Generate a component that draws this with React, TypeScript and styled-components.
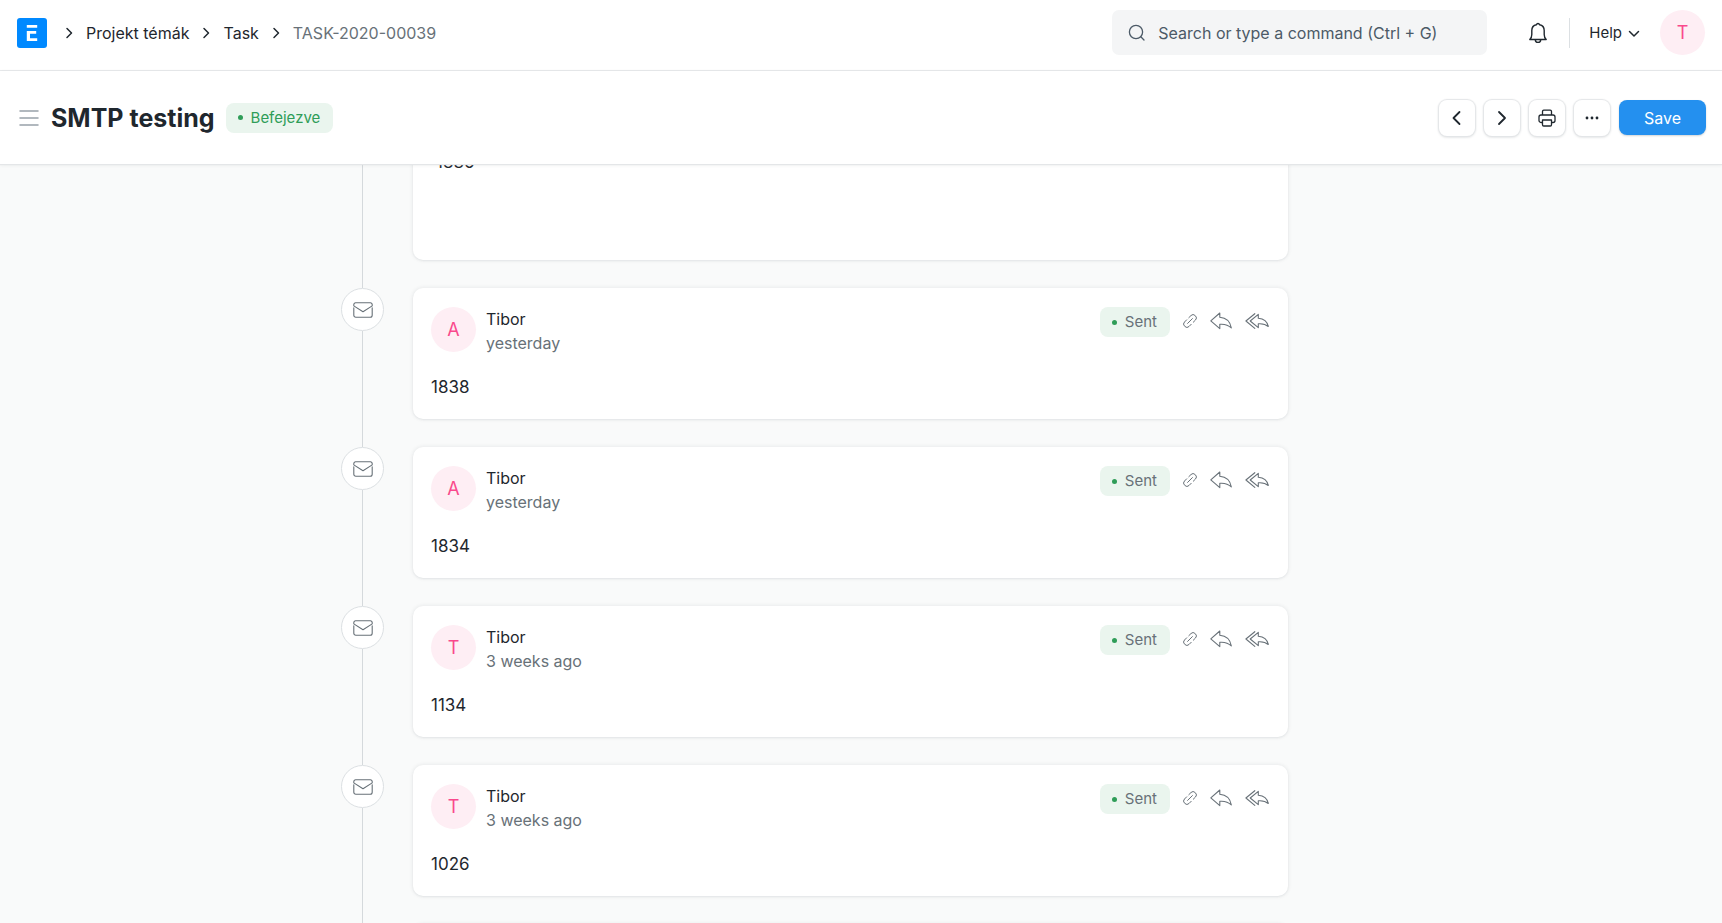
import React from "react";
import styled, { createGlobalStyle } from "styled-components";

const GlobalStyle = createGlobalStyle`
  *, *::before, *::after { box-sizing: border-box; }
  body {
    margin: 0;
    background: #f9fafa;
    color: #1f272e;
    font-family: Inter, "Noto Sans", sans-serif;
    font-size: 16px;
    line-height: 24px;
  }
  button, input { font: inherit; color: inherit; }
  a { color: inherit; text-decoration: none; }
  svg { display: block; flex: none; }
`;

const Page = styled.div`
  display: flex;
  flex-direction: column;
  height: 100vh;
  overflow: hidden;
`;

const Navbar = styled.header`
  display: flex;
  align-items: center;
  justify-content: space-between;
  flex: none;
  padding: 10px 17px 15px;
  background: #fff;
  border-bottom: 1px solid #e8eaec;
`;

const Breadcrumbs = styled.nav`
  display: flex;
  align-items: center;
  gap: 10px;
`;

const Logo = styled.a`
  display: block;
  margin-right: 5px;
`;

const Crumb = styled.a<{ $muted?: boolean }>`
  color: ${(p) => (p.$muted ? "#687178" : "#1f272e")};
`;

const NavTools = styled.div`
  display: flex;
  align-items: center;
`;

const SearchBox = styled.label`
  display: flex;
  align-items: center;
  gap: 12px;
  width: 375px;
  height: 45px;
  padding: 0 16px;
  border-radius: 7px;
  background: #f4f5f6;
  color: #4c5a67;
`;

const SearchInput = styled.input`
  flex: 1;
  min-width: 0;
  padding: 0;
  border: 0;
  outline: 0;
  background: transparent;
  &::placeholder { color: #4c5a67; opacity: 1; }
`;

const PlainButton = styled.button`
  display: flex;
  align-items: center;
  padding: 0;
  border: 0;
  background: transparent;
  color: #1f272e;
  cursor: pointer;
`;

const BellButton = styled(PlainButton)`
  margin: 0 21px 0 41px;
`;

const HelpButton = styled(PlainButton)`
  gap: 6px;
  height: 30px;
  margin-right: 20px;
  padding-left: 19px;
  border-left: 1px solid #dce0e3;
  font-size: 15px;
`;

const Avatar = styled.span`
  display: flex;
  flex: none;
  align-items: center;
  justify-content: center;
  width: 45px;
  height: 45px;
  border-radius: 50%;
  background: #feeef4;
  color: #f9498c;
  font-size: 18px;
`;

const PageHead = styled.div`
  display: flex;
  align-items: center;
  justify-content: space-between;
  flex: none;
  height: 93px;
  padding: 0 16px 0 19px;
  background: #fff;
  box-shadow: 0 1px 1px #e4e6e8, 0 1px 4px rgba(25, 39, 52, 0.08);
  z-index: 1;
`;

const TitleArea = styled.div`
  display: flex;
  align-items: center;
`;

const MenuButton = styled(PlainButton)`
  margin-right: 12px;
  color: #98a1a9;
`;

const Title = styled.h1`
  margin: 0 11px 0 0;
  font-size: 25px;
  font-weight: 700;
  line-height: 32px;
`;

const Pill = styled.span<{ $muted?: boolean }>`
  display: flex;
  align-items: center;
  gap: 8px;
  height: 30px;
  padding: 0 13px 0 12px;
  border-radius: 8px;
  background: #eaf5ee;
  color: ${(p) => (p.$muted ? "#687178" : "#2f9d58")};
  font-size: 15px;
  &::before {
    content: "";
    width: 5px;
    height: 5px;
    border-radius: 50%;
    background: #2f9d58;
  }
`;

const Actions = styled.div`
  display: flex;
  align-items: center;
  gap: 9px;
`;

const IconButton = styled.button`
  display: flex;
  align-items: center;
  justify-content: center;
  width: 36px;
  height: 36px;
  padding: 0;
  border: 0;
  border-radius: 8px;
  background: #fff;
  box-shadow: 0 0 1px 1px #e4e6e8, 0 1px 3px rgba(25, 39, 52, 0.2);
  cursor: pointer;
`;

const SaveButton = styled.button`
  height: 35px;
  padding: 0 25px;
  border: 0;
  border-radius: 8px;
  background: #2490ef;
  color: #fff;
  box-shadow: 0 1px 2px rgba(25, 39, 52, 0.2);
  cursor: pointer;
`;

const Main = styled.main`
  flex: 1;
  min-height: 0;
  overflow-y: auto;
  scrollbar-width: none;
`;

const Timeline = styled.ul`
  display: flex;
  flex-direction: column;
  max-width: 1040px;
  margin: -20px auto 0;
  padding: 0 93px 0 0;
  list-style: none;
`;

const Entry = styled.li`
  display: grid;
  grid-template-columns: 43px 1fr;
  column-gap: 29px;
`;

const Rail = styled.div`
  display: flex;
  flex-direction: column;
  align-items: center;
`;

const RailLine = styled.span`
  flex: 1;
  width: 1px;
  background: #d5d9dc;
`;

const RailIcon = styled.span`
  display: flex;
  align-items: center;
  justify-content: center;
  width: 43px;
  height: 43px;
  border: 1px solid #dce0e3;
  border-radius: 50%;
  background: #fff;
  color: #687178;
`;

const Card = styled.article`
  margin-bottom: 28px;
  padding: 19px 18px 20px;
  border-radius: 10px;
  background: #fff;
  box-shadow: 0 0 4px rgba(25, 39, 52, 0.1), 0 1px 2px rgba(25, 39, 52, 0.05);
`;

const QuoteCard = styled(Card)`
  min-height: 116px;
  padding: 6px 23px;
  font-size: 17px;
`;

const CardHead = styled.div`
  display: flex;
  align-items: flex-start;
  gap: 10px;
`;

const Sender = styled.div`
  flex: 1;
`;

const When = styled.div`
  color: #687178;
`;

const CardTools = styled.div`
  display: flex;
  align-items: center;
  padding-right: 1px;
`;

const ToolButton = styled(PlainButton)`
  margin: 0 0 2px 13px;
  color: #687178;
`;

const Body = styled.p`
  margin: 20px 0 0;
  font-size: 17px;
`;

type IconProps = { w: number; h: number; line?: number; children: React.ReactNode };

const Icon = ({ w, h, line = 1.1, children }: IconProps) => (
  <svg
    width={w}
    height={h}
    viewBox={`0 0 ${w} ${h}`}
    fill="none"
    stroke="currentColor"
    strokeWidth={line}
    strokeLinecap="round"
    strokeLinejoin="round"
    aria-hidden="true"
  >
    {children}
  </svg>
);

const CrumbArrow = () => <Icon w={14} h={14} line={1.5}><path d="M5 2.500 9.500 7 5 11.500" /></Icon>;

const LogoMark = () => (
  <svg width="30" height="30" viewBox="0 0 30 30" aria-hidden="true">
    <rect width="30" height="30" rx="3" fill="#0089ff" />
    <path d="M9.800 7h10.400v2.800H9.800zM9.800 13h9.400v2.800h-6.200v4.500h7.200v2.800H9.800z" fill="#fff" />
  </svg>
);

const MailIcon = () => (
  <Icon w={20} h={16}>
    <path d="M.8 5.800V13.200a2 2 0 0 0 2 2h14.400a2 2 0 0 0 2-2V5.800M.8 3.900V2.600A1.800 1.800 0 0 1 2.600.8h14.800a1.800 1.800 0 0 1 1.800 1.800v1.300L10 9.800z" />
  </Icon>
);

const LinkIcon = () => (
  <Icon w={14} h={14} line={1}>
    <path d="M4.600 9.400 9.400 4.600M5.800 3.700 8 1.500a2.900 2.900 0 0 1 4.100 0l.4.4a2.900 2.900 0 0 1 0 4.100L10.300 8.200M8.200 10.300 6 12.500a2.900 2.900 0 0 1-4.100 0l-.4-.4a2.900 2.900 0 0 1 0-4.100L3.700 5.800" />
  </Icon>
);

const ReplyIcon = () => (
  <Icon w={22} h={18}>
    <path d="M9.800 1 .8 8.900l9 7.700v-4.300c4.600-.4 8.500.7 11.500 3.600-1-6-5-10.200-11.500-10.700z" />
  </Icon>
);

const ReplyAllIcon = () => (
  <Icon w={24} h={18}>
    <path d="M9.800 1.700.9 9l8.900 7.400M13.300 2.300 5.200 9l8.100 6.700v-3.900c4-.3 7.200.2 10 2.700-1-5-4.600-8-10-8.300z" />
  </Icon>
);

const PrinterIcon = () => (
  <Icon w={18} h={18} line={1.3}>
    <path d="M4.500 6V2.500A1.300 1.300 0 0 1 5.800 1.200h6.400a1.300 1.300 0 0 1 1.300 1.300V6M4.500 13.500H3A2 2 0 0 1 1 11.500V8a2 2 0 0 1 2-2h12a2 2 0 0 1 2 2v3.500a2 2 0 0 1-2 2h-1.500M4.500 11h9v4.800a1.200 1.200 0 0 1-1.200 1.200H5.700a1.200 1.200 0 0 1-1.200-1.200z" />
  </Icon>
);

const messages = [
  { initial: "A", when: "yesterday", text: "1838" },
  { initial: "A", when: "yesterday", text: "1834" },
  { initial: "T", when: "3 weeks ago", text: "1134" },
  { initial: "T", when: "3 weeks ago", text: "1026" },
];

const Message = ({ initial, when, text }: { initial: string; when: string; text: string }) => (
  <Entry>
    <Rail>
      <RailIcon><MailIcon /></RailIcon>
      <RailLine />
    </Rail>
    <Card>
      <CardHead>
        <Avatar>{initial}</Avatar>
        <Sender>
          <div>Tibor</div>
          <When>{when}</When>
        </Sender>
        <CardTools>
          <Pill $muted>Sent</Pill>
          <ToolButton aria-label="Copy link"><LinkIcon /></ToolButton>
          <ToolButton aria-label="Reply"><ReplyIcon /></ToolButton>
          <ToolButton aria-label="Reply all"><ReplyAllIcon /></ToolButton>
        </CardTools>
      </CardHead>
      <Body>{text}</Body>
    </Card>
  </Entry>
);

export default function App() {
  return (
    <Page>
      <GlobalStyle />
      <Navbar>
        <Breadcrumbs aria-label="Breadcrumb">
          <Logo href="#" aria-label="Home"><LogoMark /></Logo>
          <CrumbArrow />
          <Crumb href="#">Projekt témák</Crumb>
          <CrumbArrow />
          <Crumb href="#">Task</Crumb>
          <CrumbArrow />
          <Crumb href="#" $muted>TASK-2020-00039</Crumb>
        </Breadcrumbs>
        <NavTools>
          <SearchBox>
            <Icon w={18} h={18} line={1.3}>
              <circle cx="8" cy="8" r="6.600" /><path d="m12.800 12.800 3.200 3.200" />
            </Icon>
            <SearchInput type="text" aria-label="Search" placeholder="Search or type a command (Ctrl + G)" />
          </SearchBox>
          <BellButton aria-label="Notifications">
            <Icon w={20} h={22} line={1.4}>
              <path d="M1.800 17.500h16.400c-1.500-1.500-2-3-2-5V8.500c0-3-2-5.300-4.600-5.800a1.700 1.700 0 0 0-3.200 0C5.800 3.200 3.800 5.500 3.800 8.500v4c0 2-.5 3.500-2 5zM7.300 17.700a2.700 2.700 0 0 0 5.400 0" />
            </Icon>
          </BellButton>
          <HelpButton>Help<Icon w={12} h={12} line={1.5}><path d="M1.500 4.500 6 9l4.500-4.500" /></Icon></HelpButton>
          <Avatar>T</Avatar>
        </NavTools>
      </Navbar>
      <PageHead>
        <TitleArea>
          <MenuButton aria-label="Toggle sidebar">
            <Icon w={20} h={16} line={1.5}><path d="M1 1h18M1 8h18M1 15h18" /></Icon>
          </MenuButton>
          <Title>SMTP testing</Title>
          <Pill>Befejezve</Pill>
        </TitleArea>
        <Actions>
          <IconButton aria-label="Previous"><Icon w={16} h={16} line={1.8}><path d="M10.500 2 4.500 8l6 6" /></Icon></IconButton>
          <IconButton aria-label="Next"><Icon w={16} h={16} line={1.8}><path d="m5 2 6 6-6 6" /></Icon></IconButton>
          <IconButton aria-label="Print"><PrinterIcon /></IconButton>
          <IconButton aria-label="More">
            <Icon w={14} h={4} line={0}>
              <g fill="currentColor" stroke="none">
                <circle cx="2" cy="2" r="1.400" />
                <circle cx="7" cy="2" r="1.400" />
                <circle cx="12" cy="2" r="1.400" />
              </g>
            </Icon>
          </IconButton>
          <SaveButton>Save</SaveButton>
        </Actions>
      </PageHead>
      <Main>
        <Timeline>
          <Entry>
            <Rail><RailLine /></Rail>
            <QuoteCard>1836</QuoteCard>
          </Entry>
          {messages.map((m) => <Message key={m.text} {...m} />)}
          <Entry>
            <Rail><RailLine /></Rail>
            <Card />
          </Entry>
        </Timeline>
      </Main>
    </Page>
  );
}
